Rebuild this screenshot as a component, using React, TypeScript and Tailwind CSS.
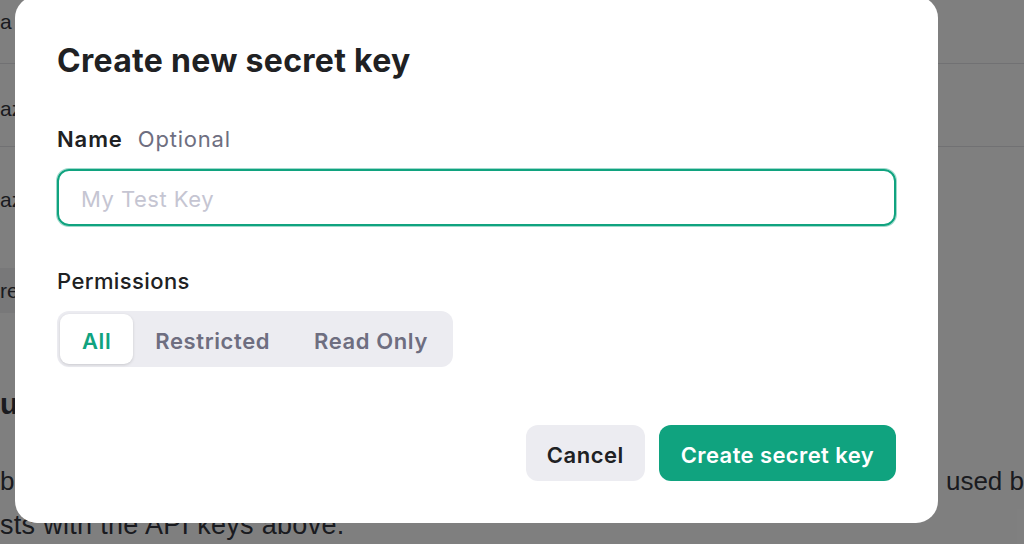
import { useState } from "react";

const PERMISSIONS = ["All", "Restricted", "Read Only"];

function BackgroundPage() {
    return (
        <div className="flex flex-col text-[21px] text-[#353740]">
            <div className="flex h-[64px] items-center border-b border-[#e3e3e6] pb-[20px]">
                <span>a</span>
            </div>
            <div className="flex h-[83px] items-center border-b border-[#e3e3e6] pt-[8px]">
                <span>az</span>
            </div>
            <div className="flex h-[90px] items-center pt-[16px]">
                <span>az</span>
            </div>
            <div className="mt-[31px] flex h-[45px] w-[200px] items-center bg-[#f0f0f2]">
                <span>re</span>
            </div>
            <div className="mt-[74px] text-[30px] font-bold leading-[34px]">
                <span>u</span>
            </div>
            <div className="mt-[44px] flex items-center justify-between text-[26px] leading-[32px]">
                <span>b</span>
                <span>used b</span>
            </div>
            <div className="mt-[12px] text-[27px] leading-[32px] tracking-[0.3px]">
                <span>sts with the API keys above.</span>
            </div>
        </div>
    );
}

function CreateKeyModal() {
    const [perm, setPerm] = useState("All");

    return (
        <div className="absolute left-[15px] top-[-4px] flex h-[527px] w-[923px] flex-col rounded-[22px] bg-white px-[42px] pt-[42px] font-['Inter',sans-serif] text-[#202123]">
            <h2 className="text-[32px] font-bold leading-[46px] tracking-[0.3px]">Create new secret key</h2>

            <div className="mt-[41px] flex items-center gap-[15px] text-[22px] leading-[28px]">
                <span className="font-semibold tracking-[0.9px]">Name</span>
                <span className="tracking-[0.8px] text-[#6e6e80]">Optional</span>
            </div>
            <input
                className="mt-[16px] h-[57px] w-full rounded-[12px] border-2 border-[#10a37f] px-[22px] pt-[3px] text-[22px] tracking-[0.5px] outline-none ring-1 ring-[#10a37f]/40 placeholder:text-[#c5c5d2]"
                placeholder="My Test Key"
            />

            <div className="mt-[41px] text-[22px] font-medium leading-[28px] tracking-[0.4px]">Permissions</div>
            <div className="mt-[16px] flex h-[56px] w-fit items-center rounded-[12px] bg-[#ececf1] p-[3px]">
                {PERMISSIONS.map(p => (
                    <button
                        key={p}
                        onClick={() => setPerm(p)}
                        className={
                            p === perm
                                ? "h-full rounded-[9px] bg-white px-[22px] pt-[4px] text-[22px] font-semibold tracking-[0.6px] text-[#10a37f] shadow-[0_1px_3px_rgba(0,0,0,0.15)]"
                                : "h-full rounded-[9px] px-[22px] pt-[4px] text-[22px] font-semibold tracking-[0.6px] text-[#6e6e80]"
                        }
                    >
                        {p}
                    </button>
                ))}
            </div>

            <div className="mt-[58px] flex justify-end gap-[14px]">
                <button className="h-[56px] rounded-[12px] bg-[#ececf1] px-[21px] pt-[4px] text-[22px] font-semibold tracking-[0.5px]">
                    Cancel
                </button>
                <button className="h-[56px] rounded-[12px] bg-[#10a37f] px-[22px] pt-[4px] text-[22px] font-semibold tracking-[0.4px] text-white">
                    Create secret key
                </button>
            </div>
        </div>
    );
}

export default function App() {
    return (
        <div className="relative h-[544px] w-[1024px] overflow-hidden bg-white font-['Liberation_Sans',sans-serif]">
            <BackgroundPage />
            <div className="absolute inset-0 bg-black/50" />
            <CreateKeyModal />
        </div>
    );
}
